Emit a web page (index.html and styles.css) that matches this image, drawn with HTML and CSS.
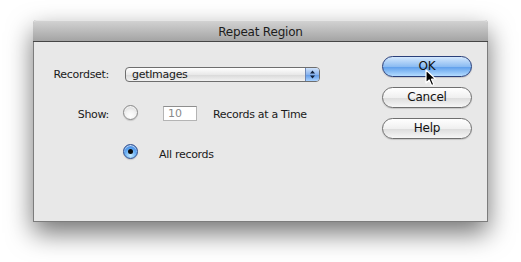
FILE: index.html
```html
<!DOCTYPE html>
<html lang="en">
<head>
  <meta charset="UTF-8">
  <title>Repeat Region</title>
  <link rel="stylesheet" href="styles.css">
</head>
<body>

  <div class="window">
    <div class="titlebar">Repeat Region</div>

    <div class="content">
      <div class="form">
        <label class="label">Recordset:</label>
        <div class="popup">
          <span class="popup-text">getImages</span>
          <span class="popup-arrows">
            <svg width="7" height="9" viewBox="0 0 7 9">
              <path d="M3.5 0.5 L6 3.5 L1 3.5 Z M3.5 8.5 L6 5.5 L1 5.5 Z" fill="#10203a"/>
            </svg>
          </span>
        </div>

        <label class="label low">Show:</label>
        <div class="row">
          <span class="radio"></span>
          <span class="field">10</span>
          <span class="text records">Records at a Time</span>
        </div>

        <span></span>
        <div class="row">
          <span class="radio checked"></span>
          <span class="text all">All records</span>
        </div>
      </div>

      <div class="buttons">
        <div class="btn btn-default">OK</div>
        <div class="btn">Cancel</div>
        <div class="btn">Help</div>
      </div>
    </div>

    <!-- mouse pointer over the OK button -->
    <svg class="cursor" width="14" height="18" viewBox="0 0 14 18">
      <path d="M1 1 L1 14 L4.2 11 L6.6 16.5 L8.8 15.5 L6.5 10.2 L10.8 10.2 Z" fill="#000" stroke="#fff" stroke-width="1.2" stroke-linejoin="round"/>
    </svg>
  </div>

</body>
</html>
```

FILE: styles.css
```css
html, body {
  margin: 0;
  padding: 0;
  background-color: #fff;
}
body {
  height: 262px;
  font-family: "DejaVu Sans", Verdana, sans-serif;
  font-size: 11px;
  color: #1a1a1a;
}
.window {
  position: relative;
  box-sizing: border-box;
  width: 455px;
  height: 202px;
  margin: 0 0 0 33px;
  top: 20px;
  background-color: #e8e8e8;
  border: 1px solid #7c7c7c;
  border-top: none;
  border-radius: 4px 4px 0 0;
  box-shadow: 0 11px 26px rgba(0, 0, 0, 0.55);
}
.titlebar {
  box-sizing: border-box;
  height: 22px;
  line-height: 22px;
  margin: 0 -1px;
  text-align: center;
  font-size: 12px;
  letter-spacing: -0.2px;
  color: #1c1c1c;
  background: linear-gradient(#d2d2d2, #a4a4a4);
  border-top: 1px solid #e6e6e6;
  border-bottom: 1px solid #464646;
  border-radius: 4px 4px 0 0;
}
.content {
  display: flex;
  padding-right: 15px;
}
.form {
  display: grid;
  grid-template-columns: 75px auto;
  grid-template-rows: 16px 17px 17px;
  column-gap: 14px;
  row-gap: 22px;
  align-items: center;
  padding-top: 24px;
}
.label {
  text-align: right;
  letter-spacing: -0.3px;
}
.label.low {
  padding-top: 3px;
}
.popup {
  display: flex;
  align-items: center;
  box-sizing: border-box;
  width: 195px;
  height: 15px;
  margin-left: 2px;
  border: 1px solid #6e6e6e;
  border-radius: 4px;
  background: linear-gradient(#ffffff, #e9e9e9 50%, #d8d8d8 51%, #f2f2f2);
  overflow: hidden;
}
.popup-text {
  flex: 1;
  padding-left: 6px;
  letter-spacing: -0.3px;
  line-height: 13px;
}
.popup-arrows {
  display: flex;
  align-items: center;
  justify-content: center;
  width: 13px;
  height: 13px;
  border-left: 1px solid #6e87b4;
  background: linear-gradient(#cfe2fb, #8ab4ee 50%, #5f98e6 51%, #a9d2ff);
}
.row {
  display: flex;
  align-items: center;
}
.radio {
  position: relative;
  box-sizing: border-box;
  width: 15px;
  height: 15px;
  border-radius: 50%;
  border: 1px solid #8a8a8a;
  background: radial-gradient(circle at 50% 75%, #ffffff, #f2f2f2 45%, #cfcfcf);
  box-shadow: inset 0 1px 1px rgba(255, 255, 255, 0.8), 0 1px 1px rgba(0, 0, 0, 0.15);
}
.radio.checked {
  border-color: #2d4c8c;
  background: radial-gradient(circle at 50% 80%, #c6ecff, #5ea7f2 50%, #2d6fd1);
}
.radio.checked::after {
  content: "";
  position: absolute;
  left: 4px;
  top: 4px;
  width: 5px;
  height: 5px;
  border-radius: 50%;
  background-color: #0b0b0b;
}
.field {
  box-sizing: border-box;
  width: 34px;
  height: 15px;
  margin-left: 25px;
  margin-top: 2px;
  padding-left: 4px;
  line-height: 14px;
  color: #8a8a8a;
  background-color: #fff;
  border: 1px solid #b4b4b4;
  border-top-color: #8e8e8e;
}
.text {
  letter-spacing: -0.3px;
  padding-top: 3px;
}
.records {
  margin-left: 16px;
}
.all {
  margin-left: 21px;
  padding-top: 6px;
}
.buttons {
  display: flex;
  flex-direction: column;
  gap: 10px;
  margin-left: auto;
  padding-top: 14px;
  width: 90px;
}
.btn {
  box-sizing: border-box;
  height: 21px;
  line-height: 19px;
  text-align: center;
  font-size: 12px;
  letter-spacing: -0.2px;
  color: #111;
  border: 1px solid #6f6f6f;
  border-radius: 11px;
  background: linear-gradient(#ffffff, #f0f0f0 50%, #dcdcdc 51%, #f6f6f6);
  box-shadow: 0 1px 1px rgba(0, 0, 0, 0.15);
}
.btn-default {
  border-color: #2a3f7a;
  background: linear-gradient(#d4e8fd, #8cbcf2 50%, #5b9cea 51%, #b4dcff);
}
.cursor {
  position: absolute;
  left: 391px;
  top: 49px;
}
```
